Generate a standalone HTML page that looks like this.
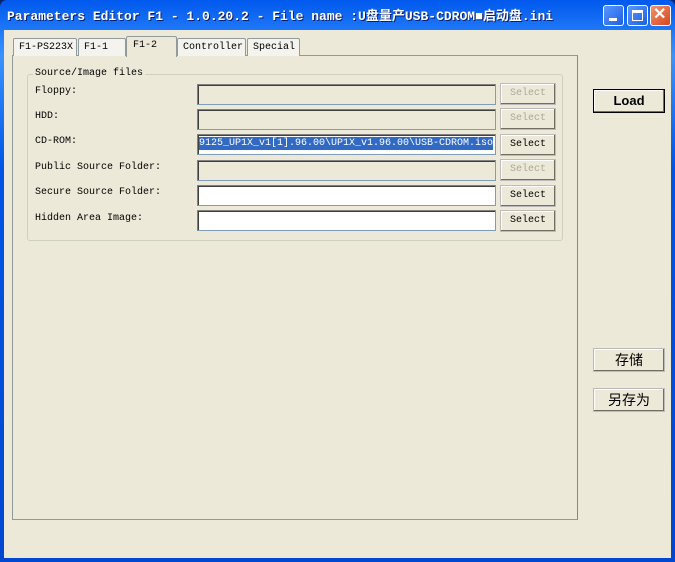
<!DOCTYPE html><html><head><style>
*{margin:0;padding:0;box-sizing:border-box}
body{width:675px;height:562px;overflow:hidden;background:#0a246a;font-family:"Liberation Mono","Noto Sans CJK SC",monospace;font-size:10px;position:relative}
.win{position:absolute;left:0;top:0;width:675px;height:562px;background:linear-gradient(#0058ee,#3a93ff 10%,#0055e5 30%,#0048d0);border-radius:7px 7px 0 0}
.client{position:absolute;left:4px;top:30px;width:667px;height:528px;background:#ece9d8}
.title{position:absolute;left:7px;top:5px;color:#fff;font-weight:bold;font-size:13px;text-shadow:1px 1px #0a1e6e;white-space:nowrap}
.tb{position:absolute;top:5px;width:21px;height:21px;border:1px solid #fff;border-radius:3px;background:linear-gradient(135deg,#5a97ff,#1f5fe0)}
.a{position:absolute;white-space:nowrap;color:#000}
.tab{position:absolute;top:38px;height:18px;border:1px solid #919b9c;border-bottom:none;background:#f4f3ee;padding:3px 0 0 5px;border-radius:2px 2px 0 0}
.panel{position:absolute;left:12px;top:55px;width:566px;height:465px;border:1px solid #919b9c;border-right-color:#888;background:#ece9d8}
.grp{position:absolute;left:27px;top:74px;width:536px;height:167px;border:1px solid #d0d0bf;border-radius:3px}
.tx{position:absolute;left:197px;width:299px;height:21px;border:1px solid #7f9db9;border-top-color:#808080;border-left-color:#808080;box-shadow:inset 1px 1px #404040}
.btn{position:absolute;left:500px;width:56px;height:22px;border:1px solid #bbb;box-shadow:inset -1px -1px #716f64,inset 1px 1px #fff;background:#ece9d8;text-align:center;line-height:20px}
.btn.d{color:#aca899}
.rb{position:absolute;left:593px;width:72px;height:24px;border:1px solid #000;box-shadow:inset -1px -1px #716f64,inset 1px 1px #fff;background:#ece9d8;text-align:center;line-height:22px;font-family:"Liberation Sans","Noto Sans CJK SC",sans-serif;font-size:14px}
</style></head><body>
<div class="win"></div>
<div class="title">Parameters Editor F1 - 1.0.20.2 - File name :U盘量产USB-CDROM■启动盘.ini</div>
<div class="tb" style="left:603px"><div style="position:absolute;left:5px;top:12px;width:8px;height:3px;background:#fff"></div></div>
<div class="tb" style="left:627px"><div style="position:absolute;left:4px;top:4px;width:11px;height:11px;border:1px solid #fff;border-top-width:3px"></div></div>
<div class="tb" style="left:650px;background:linear-gradient(135deg,#f0936e,#d6461e)"><div style="position:absolute;left:2px;top:-2px;color:#fff;font:bold 16px 'Liberation Sans',sans-serif">✕</div></div>
<div class="client"></div>
<div class="panel"></div>
<div class="tab" style="left:13px;width:64px">F1-PS223X</div>
<div class="tab" style="left:78px;width:48px">F1-1</div>
<div class="tab" style="left:177px;width:69px">Controller</div>
<div class="tab" style="left:247px;width:53px">Special</div>
<div class="tab" style="left:126px;top:36px;width:51px;height:21px;background:#ece9d8;padding-left:6px">F1-2</div>
<div class="grp"></div>
<div class="a" style="left:33px;top:68px;background:#ece9d8;padding:0 2px">Source/Image files</div>
<div class="a" style="left:35px;top:86px">Floppy:</div>
<div class="a" style="left:35px;top:111px">HDD:</div>
<div class="a" style="left:35px;top:136px">CD-ROM:</div>
<div class="a" style="left:35px;top:162px">Public Source Folder:</div>
<div class="a" style="left:35px;top:187px">Secure Source Folder:</div>
<div class="a" style="left:35px;top:213px">Hidden Area Image:</div>
<div class="tx" style="top:84px"></div>
<div class="tx" style="top:109px"></div>
<div class="tx" style="top:134px;background:#fff"><div style="position:absolute;left:1px;top:2px;width:294px;height:13px;background:#316ac5;color:#fff;overflow:hidden;white-space:nowrap;line-height:13px">9125_UP1X_v1[1].96.00\UP1X_v1.96.00\USB-CDROM.iso</div></div>
<div class="tx" style="top:160px"></div>
<div class="tx" style="top:185px;background:#fff"></div>
<div class="tx" style="top:210px;background:#fff"></div>
<div class="btn d" style="top:83px">Select</div>
<div class="btn d" style="top:108px">Select</div>
<div class="btn" style="top:134px">Select</div>
<div class="btn d" style="top:159px">Select</div>
<div class="btn" style="top:185px">Select</div>
<div class="btn" style="top:210px">Select</div>
<div class="rb" style="top:89px;font-weight:bold;font-size:13px">Load</div>
<div class="rb" style="top:348px;border-color:#bbb">存储</div>
<div class="rb" style="top:388px;border-color:#bbb">另存为</div>
</body></html>
